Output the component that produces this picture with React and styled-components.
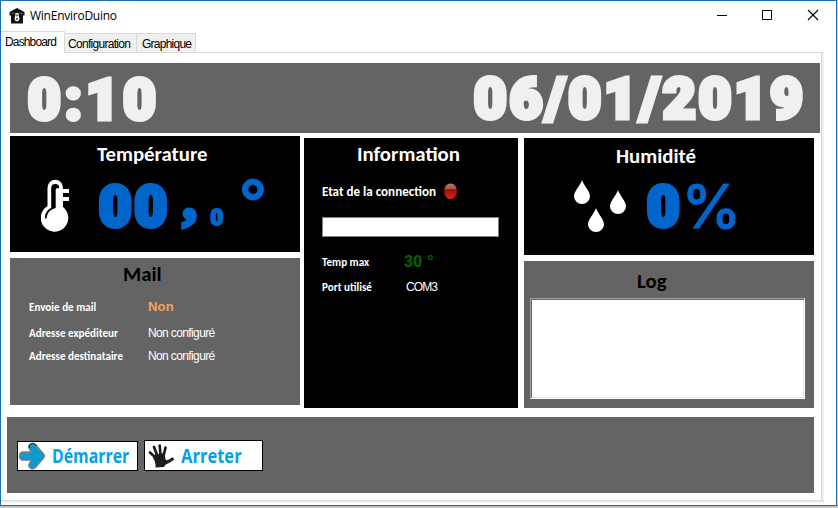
import React from "react";
import styled, { createGlobalStyle } from "styled-components";

const Global = createGlobalStyle`
  * { box-sizing: border-box; }
  body { margin: 0; background: #fff; overflow: hidden; }
`;

const Desktop = styled.div`
  width: 838px;
  height: 508px;
  background: linear-gradient(to bottom, #d0d0d0 505px, #b4b4b4 506px, #d2d2d2 508px);
`;
const Window = styled.div`
  width: 837px;
  height: 506px;
  border: 1px solid #1a6fb8;
  background: #fff;
  display: flex;
  flex-direction: column;
`;
const TitleBar = styled.header`
  height: 30px;
  flex: none;
  display: flex;
  align-items: center;
  padding-left: 8px;
  font: 12px/30px "Open Sans", sans-serif;
  color: #000;
`;
const Caption = styled.span`
  flex: 1;
  margin-left: 5px;
  letter-spacing: -0.25px;
`;
const Controls = styled.div`
  display: flex;
  width: 136px;
  svg { display: block; width: 46px; height: 30px; flex: none; }
`;
const Tabs = styled.nav`
  display: flex;
  align-items: flex-end;
  height: 21px;
  flex: none;
  position: relative;
`;
const Tab = styled.div`
  width: ${(p) => p.$w}px;
  height: ${(p) => (p.$active ? 22 : 19)}px;
  margin-bottom: ${(p) => (p.$active ? -1 : 0)}px;
  z-index: ${(p) => (p.$active ? 1 : 0)};
  padding-left: ${(p) => p.$x}px;
  border: 1px solid #d9d9d9;
  border-width: 1px 1px 0 0;
  background: ${(p) => (p.$active ? "#fff" : "#f0f0f0")};
  font: 12px/20px "Liberation Sans", sans-serif;
  letter-spacing: ${(p) => p.$ls}px;
  white-space: nowrap;
  color: #000;
`;
const Page = styled.main`
  width: 823px;
  height: 449px;
  border-top: 1px solid #d9d9d9;
  border-right: 2px solid #f0f0f0;
  border-bottom: 1px solid #d9d9d9;
  box-shadow: inset -1px 0 #d9d9d9, 0 2px #f0f0f0;
  padding: 10px 0 0 6px;
`;
const Banner = styled.section`
  margin-left: 3px;
  width: 810px;
  height: 70px;
  background: #646464;
  display: flex;
  justify-content: space-between;
  padding: 0 14px 0 18px;
`;
const Digits = styled.span`
  display: block;
  font: ${(p) => p.$weight || 900} ${(p) => p.$size || 56}px/${(p) => p.$lh || 70}px ${(p) => p.$face || "Roboto"}, sans-serif;
  color: ${(p) => p.$color || "#f0f0f0"};
  -webkit-text-stroke: ${(p) => p.$stroke ?? 5}px ${(p) => p.$color || "#f0f0f0"};
  letter-spacing: ${(p) => p.$ls || 0}px;
  white-space: nowrap;
  margin: ${(p) => p.$m || 0};
`;
const Columns = styled.div`
  display: grid;
  grid-template-columns: 290px 214px 290px;
  column-gap: 5px;
  margin: 3px 0 0 3px;
  height: 281px;
  align-items: start;
`;
const Column = styled.div`
  display: flex;
  flex-direction: column;
  gap: 6px;
  padding-top: ${(p) => p.$top || 0}px;
  margin-left: ${(p) => p.$left || 0}px;
`;
const Panel = styled.section`
  width: ${(p) => p.$w || 290}px;
  height: ${(p) => p.$h}px;
  background: ${(p) => (p.$dark ? "#000" : "#646464")};
`;
const Heading = styled.h2`
  margin: 0 0 0 ${(p) => p.$x}px;
  padding-top: ${(p) => p.$y || 6}px;
  font: bold ${(p) => p.$size || 20.8}px/24px Carlito, Calibri, Lato, sans-serif;
  color: ${(p) => p.$color || "#fff"};
  white-space: nowrap;
`;
const Gauge = styled.div`
  display: flex;
  align-items: flex-start;
  padding-left: ${(p) => p.$x}px;
  svg { display: block; flex: none; margin-top: ${(p) => p.$icon}px; }
`;
const Row = styled.div`
  display: grid;
  grid-template-columns: ${(p) => p.$c}px 1fr;
  align-items: center;
  height: ${(p) => p.$h}px;
  margin: ${(p) => p.$mt || 0}px 0 0 ${(p) => p.$x}px;
`;
const Label = styled.span`
  font: bold ${(p) => p.$size || 11.1}px/16px Carlito, Calibri, Lato, sans-serif;
  color: #fff;
  white-space: nowrap;
`;
const Value = styled.span`
  font: ${(p) => p.$font || "12px/16px"} "Liberation Sans", sans-serif;
  color: ${(p) => p.$color || "#fff"};
  letter-spacing: ${(p) => p.$ls ?? -0.62}px;
  white-space: nowrap;
`;
const Progress = styled.div`
  width: 177px;
  height: 20px;
  margin: 0 0 13px 18px;
  border: 1px solid #828282;
  background: #fff;
`;
const LogBox = styled.div`
  width: 275px;
  height: 101px;
  margin: 5px 0 0 6px;
  background: #fff;
  border: 1px solid #a0a0a0;
  border-right-color: #fff;
  border-bottom-color: #fff;
  box-shadow: inset 1px 1px #696969, inset -1px -1px #e3e3e3;
`;
const Footer = styled.footer`
  width: 807px;
  height: 76px;
  padding: 23px 0 0 10px;
  background: #646464;
  display: flex;
  align-items: flex-start;
  gap: 6px;
`;
const Action = styled.button`
  width: ${(p) => p.$w}px;
  height: ${(p) => p.$h}px;
  margin: ${(p) => 31 - p.$h}px 0 0;
  padding: 0 0 0 ${(p) => p.$pl || 0}px;
  border: 1px solid #000;
  background: #fff;
  display: flex;
  align-items: center;
  font: bold 19px/28px "Open Sans", sans-serif;
  color: #00a2e8;
  svg { flex: none; display: block; }
`;
const ActionText = styled.span`
  margin-left: ${(p) => p.$x}px;
  transform: scaleX(${(p) => p.$sx});
  transform-origin: left;
  white-space: nowrap;
`;

const HouseIcon = () => (
  <svg width="16" height="16" viewBox="0 0 16 16">
    <path d="M8 0 .5 4v3.500H2v8h12v-8h1.500V4z" fill="#111" />
    <path d="M2.500 5.300h11" stroke="#777" strokeWidth=".7" />
    <path d="M8 5q2 0 1.700 2-.2 1 .5 2 .9 4-2.200 4.300-3.100-.3-2.200-4.300.7-1 .5-2Q6 5 8 5z" fill="#fff" />
    <path d="M8 6.500v1.700M8 10v2" stroke="#111" strokeWidth="1.200" />
  </svg>
);
const WindowControls = () => (
  <Controls>
    <svg fill="none" stroke="#000"><path d="M17 14.500h10" /></svg>
    <svg fill="none" stroke="#000"><path d="M16.500 9.500h9v9h-9z" /></svg>
    <svg fill="none" stroke="#000" strokeWidth="1.100"><path d="m16 9 10 10M26 9 16 19" /></svg>
  </Controls>
);
const Thermometer = () => (
  <svg width="30" height="54" viewBox="0 0 30 54">
    <path d="M6.500 27V8.500a7.700 7.700 0 0 1 15.400 0V10H28v4h-6v4h6v4h-6v6a13.800 13.800 0 1 1-15.500-1z" fill="#fff" />
    <path d="M10.200 29V9a4 4 0 0 1 8 .2H16q-1.300.3-1.300 1.800v18C9 31 6.500 33 5.500 39.500h-1.600C4 34 6 31 10.200 29z" fill="#000" />
  </svg>
);
const Drops = () => (
  <svg width="56" height="56" viewBox="0 0 56 56">
    {[[10, 0], [46, 10], [24, 28]].map(([x, y]) => (
      <path key={x} transform={`translate(${x} ${y})`} fill="#fff"
        d="M0 0C2 6 8 11 8 16.500a8 7.500 0 0 1-16 0C-8 11-2 6 0 0z" />
    ))}
  </svg>
);
const RedLight = () => (
  <svg width="14" height="17" viewBox="0 0 14 17">
    <defs>
      <linearGradient id="lamp" x1="0" y1="0" x2="0" y2="1">
        <stop offset="0" stopColor="#b98078" /><stop offset=".32" stopColor="#b05048" />
        <stop offset=".4" stopColor="#941208" /><stop offset="1" stopColor="#e02510" />
      </linearGradient>
    </defs>
    <ellipse cx="7.500" cy="8.300" rx="6.500" ry="7.800" fill="url(#lamp)" />
  </svg>
);
const Arrow = () => (
  <svg width="28" height="28" viewBox="0 0 28 28">
    <path d="M4.500 10H13l-1.500-2.500Q9.500 3.500 12.500 1.800 15.500.5 18 3l8 9.500q1 1.500 0 3L18 25q-2.500 2.700-5.500 1.300-3-1.800-1-5.300l1.500-2.800H4.500q-3-.6-3-4.100t3-4.100z" fill="#0a9bd0" stroke="#808080" strokeWidth="1.300" />
    <path d="M11.500 6Q10.800 3 13 1.700t5.500 1.800" fill="none" stroke="#222" strokeWidth="1" />
  </svg>
);
const Hand = () => (
  <svg width="27" height="26" viewBox="0 0 27 26">
    <g fill="none" stroke="#1d1d1b" strokeLinecap="round" strokeWidth="2.700">
      <path d="M8 15 2 9.500M9 12 6 4M12.500 12l-.8-9.500M15.500 13l2-8.500" />
      <path d="M16 20.500q4.500-1.500 8.500-4.500" strokeWidth="2.900" />
    </g>
    <path d="M6 12l10.500-2 1 6.500 3 1.500q-3 3-4.500 6l-8.500.5Q8 19 5 15z" fill="#1d1d1b" />
  </svg>
);

const BLUE = "#0066cc";

export default function App() {
  return (
    <Desktop>
      <Global />
      <Window>
        <TitleBar>
          <HouseIcon />
          <Caption>WinEnviroDuino</Caption>
          <WindowControls />
        </TitleBar>
        <Tabs>
          <Tab $w={64} $x={4} $active $ls={-0.85}>Dashboard</Tab>
          <Tab $w={72} $x={3} $ls={-0.7}>Configuration</Tab>
          <Tab $w={59} $x={5} $ls={-0.75}>Graphique</Tab>
        </Tabs>
        <Page>
          <Banner>
            <Digits $m="2px 0 0" $ls={4.500}>0:10</Digits>
            <Digits $m="1px 0 0" $ls={3.3}>06/01/2019</Digits>
          </Banner>
          <Columns>
            <Column>
              <Panel $dark $h={116}>
                <Heading $x={87}>Température</Heading>
                <Gauge $x={31} $icon={13}>
                  <Thermometer />
                  <Digits $color={BLUE} $lh={60} $ls={3} $m="11px 0 0 28px">00</Digits>
                  <Digits $color={BLUE} $face="'Liberation Serif'" $weight={700} $size={54} $lh={60} $stroke={5} $m="4px 0 0 13px">,</Digits>
                  <Digits $color={BLUE} $size={22} $lh={30} $stroke={2} $m="37px 0 0 14px">0</Digits>
                  <Digits $color={BLUE} $size={82} $weight={500} $lh={60} $stroke={1} $m="14px 0 0 14px">°</Digits>
                </Gauge>
              </Panel>
              <Panel $h={147}>
                <Heading $x={113} $y={4} $color="#000">Mail</Heading>
                <Row $x={19} $c={119} $h={26} $mt={8}>
                  <Label>Envoie de mail</Label>
                  <Value $color="#f4a460" $font="bold 13px/16px" $ls={0.2}>Non</Value>
                </Row>
                <Row $x={19} $c={119} $h={26}>
                  <Label>Adresse expéditeur</Label><Value>Non configuré</Value>
                </Row>
                <Row $x={19} $c={119} $h={20}>
                  <Label>Adresse destinataire</Label><Value>Non configuré</Value>
                </Row>
              </Panel>
            </Column>
            <Column $top={2} $left={-1}>
              <Panel $dark $w={214} $h={270}>
                <Heading $x={53} $y={4}>Information</Heading>
                <Row $x={18} $c={121} $h={51}>
                  <Label $size={13.1}>Etat de la connection</Label><RedLight />
                </Row>
                <Progress />
                <Row $x={18} $c={82} $h={24}>
                  <Label>Temp max</Label>
                  <Value $color="#006400" $font="bold 16px/20px" $ls={0.3}>30 °</Value>
                </Row>
                <Row $x={18} $c={84} $h={25}>
                  <Label>Port utilisé</Label><Value $ls={-0.9}>COM3</Value>
                </Row>
              </Panel>
            </Column>
            <Column $top={2}>
              <Panel $dark $h={117}>
                <Heading $x={92}>Humidité</Heading>
                <Gauge $x={48} $icon={12}>
                  <Drops />
                  <Digits $color={BLUE} $lh={60} $m="9px 0 0 19px">0</Digits>
                  <Digits $color={BLUE} $face="Inter" $weight={500} $size={60} $lh={60} $stroke={1} $m="8px 0 0 2px">%</Digits>
                </Gauge>
              </Panel>
              <Panel $h={147}>
                <Heading $x={113} $y={8} $color="#000">Log</Heading>
                <LogBox />
              </Panel>
            </Column>
          </Columns>
          <Footer>
            <Action $w={121} $h={30}><Arrow /><ActionText $x={6} $sx={0.835}>Démarrer</ActionText></Action>
            <Action $w={119} $h={31} $pl={3}><Hand /><ActionText $x={6} $sx={0.87}>Arreter</ActionText></Action>
          </Footer>
        </Page>
      </Window>
    </Desktop>
  );
}
